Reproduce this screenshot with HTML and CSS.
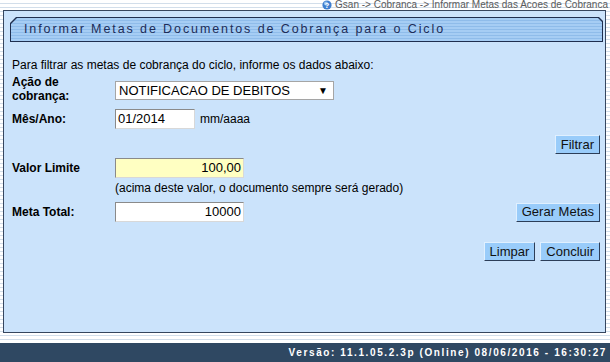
FILE: index.html
```html
<!DOCTYPE html>
<html lang="pt-BR">
<head>
<meta charset="utf-8">
<title>Informar Metas de Documentos de Cobrança para o Ciclo</title>
<link rel="stylesheet" href="styles.css">
</head>
<body>
<div class="page">
  <div class="crumb">
    <svg class="help" width="10" height="10" viewBox="0 0 10 10"><circle cx="5" cy="5" r="4.6" fill="#3f7fcf"/><circle cx="4" cy="3.6" r="2" fill="#9cc4f0"/><text x="5" y="8.2" font-size="8" font-family="Liberation Sans, Arial, sans-serif" font-weight="bold" fill="#fff" text-anchor="middle">?</text></svg>
    <span>Gsan -&gt; Cobranca -&gt; Informar Metas das Acoes de Cobranca</span>
  </div>
  <div class="panel">
    <div class="titlebar"><div class="titlebar-inner">Informar Metas de Documentos de Cobrança para o Ciclo</div></div>
    <div class="form">
      <p class="intro">Para filtrar as metas de cobrança do ciclo, informe os dados abaixo:</p>
      <div class="row row-acao">
        <div class="label">Ação de<br>cobrança:</div>
        <div class="select"><span>NOTIFICACAO DE DEBITOS</span><span class="arrow">▼</span></div>
      </div>
      <div class="row row-mes">
        <div class="label">Mês/Ano:</div>
        <div class="input w-mes">01/2014</div>
        <span class="hint-inline">mm/aaaa</span>
      </div>
      <div class="row row-filtrar">
        <button class="btn">Filtrar</button>
      </div>
      <div class="row row-valor">
        <div class="label">Valor Limite</div>
        <div class="input w-num yellow right">100,00</div>
      </div>
      <div class="row row-hint">
        <div class="label"></div>
        <span>(acima deste valor, o documento sempre será gerado)</span>
      </div>
      <div class="row row-meta">
        <div class="label">Meta Total:</div>
        <div class="input w-num right">10000</div>
        <div class="spacer"></div>
        <button class="btn">Gerar Metas</button>
      </div>
      <div class="row row-actions">
        <button class="btn">Limpar</button>
        <button class="btn">Concluir</button>
      </div>
    </div>
  </div>
  <div class="footer">Versão: 11.1.05.2.3p (Online) 08/06/2016 - 16:30:27</div>
</div>
</body>
</html>
```

FILE: styles.css
```css
html, body {
  margin: 0;
  padding: 0;
}
body {
  width: 610px;
  height: 362px;
  overflow: hidden;
  font-family: "Liberation Sans", Arial, sans-serif;
  font-size: 12px;
  color: #000;
  background: repeating-linear-gradient(to bottom, #ffffff 0, #ffffff 3px, #d2deea 3px, #d2deea 4px);
}
.page {
  display: flex;
  flex-direction: column;
  height: 362px;
}
.crumb {
  height: 10px;
  display: flex;
  justify-content: flex-end;
  align-items: center;
  gap: 3px;
  padding-right: 2px;
  font-size: 10px;
  line-height: 10px;
  color: #5a5a5a;
}
.panel {
  margin-left: 3px;
  width: 601px;
  height: 321px;
  border: 1px solid #36465e;
  background: #cbe3fb;
  display: flex;
  flex-direction: column;
}
.titlebar {
  margin: 6px 2px 0 6px;
  height: 25px;
  background: #1f2f4f;
  clip-path: polygon(6px 0, calc(100% - 4px) 0, 100% 4px, 100% 100%, 0 100%, 0 6px);
  padding: 1px;
  box-sizing: border-box;
}
.titlebar-inner {
  height: 100%;
  clip-path: polygon(6px 0, calc(100% - 4px) 0, 100% 4px, 100% 100%, 0 100%, 0 6px);
  background: repeating-linear-gradient(to bottom, #a6cdf4 0, #a6cdf4 2px, #8fbcea 2px, #8fbcea 3px);
  padding-left: 13px;
  font-size: 12.5px;
  letter-spacing: 1.9px;
  line-height: 23px;
  color: #1c2c58;
}
.form {
  padding: 0 5px 0 8px;
  display: flex;
  flex-direction: column;
}
.intro {
  margin: 16px 0 0 0;
  line-height: 14px;
}
.row {
  display: flex;
  align-items: center;
}
.label {
  width: 103px;
  flex: none;
  font-weight: bold;
  line-height: 14px;
}
.row-acao {
  margin-top: 3px;
  align-items: flex-start;
  height: 28px;
}
.select {
  margin-top: 6px;
  width: 219px;
  height: 19px;
  box-sizing: border-box;
  border: 1px solid #a5a5a5;
  background: #fff;
  display: flex;
  align-items: center;
  justify-content: space-between;
  padding: 0 5px 0 3px;
  font-size: 13px;
}
.arrow {
  font-size: 10px;
}
.input {
  height: 20px;
  box-sizing: border-box;
  background: #fff;
  border: 1px solid;
  border-color: #8a8a8a #d8d8d8 #d8d8d8 #8a8a8a;
  font-size: 13px;
  line-height: 18px;
  padding: 0 2px;
}
.w-mes { width: 80px; }
.w-num { width: 129px; }
.yellow { background: #ffffc2; }
.right { text-align: right; }
.row-mes { margin-top: 6px; }
.hint-inline { margin-left: 5px; }
.row-filtrar {
  margin-top: 6px;
  justify-content: flex-end;
}
.row-valor { margin-top: 4px; }
.row-hint {
  margin-top: 3px;
  line-height: 14px;
}
.row-meta { margin-top: 7px; }
.spacer { flex: 1; }
.row-actions {
  margin-top: 20px;
  justify-content: flex-end;
  gap: 5px;
}
.btn {
  font-family: "Liberation Sans", Arial, sans-serif;
  font-size: 13px;
  color: #111;
  background: #99ccfa;
  border: 1px solid;
  border-color: #e0f0ff #2c3e58 #2c3e58 #e0f0ff;
  height: 19px;
  padding: 0 5px;
  line-height: 16px;
  margin: 0;
}
.footer {
  margin-top: 10px;
  height: 19px;
  background: #2f4862;
  color: #fff;
  font-weight: bold;
  font-size: 10px;
  letter-spacing: 1.6px;
  line-height: 19px;
  text-align: right;
  padding-right: 3px;
}
```
